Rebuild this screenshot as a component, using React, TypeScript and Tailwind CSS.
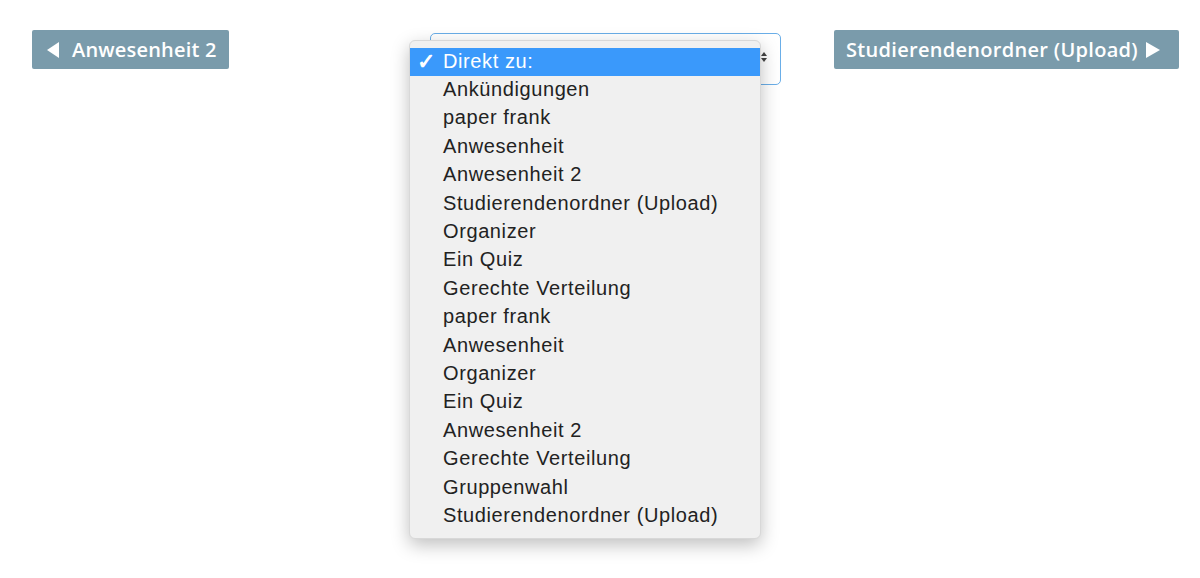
import React from "react";

const items = [
  "Ankündigungen",
  "paper frank",
  "Anwesenheit",
  "Anwesenheit 2",
  "Studierendenordner (Upload)",
  "Organizer",
  "Ein Quiz",
  "Gerechte Verteilung",
  "paper frank",
  "Anwesenheit",
  "Organizer",
  "Ein Quiz",
  "Anwesenheit 2",
  "Gerechte Verteilung",
  "Gruppenwahl",
  "Studierendenordner (Upload)",
];

export default function App() {
  return (
    <div className="w-[1200px] h-[578px] bg-white overflow-hidden">
      <div className="flex items-start pt-[30px] pl-[32px] pr-[21px]">
        <button
          className="flex items-center w-[197px] h-[39px] pl-[15px] gap-[13px] rounded-[2px] bg-[#7a9bab] text-white text-[20px] font-semibold tracking-[0.2px] whitespace-nowrap"
          style={{ fontFamily: '"Open Sans", sans-serif' }}
        >
          <svg width="12" height="16" viewBox="0 0 12 16"><polygon points="12,0 12,16 0,8" fill="white" /></svg>
          <span>Anwesenheit 2</span>
        </button>

        <div className="relative ml-[201px] mt-[3px] w-[351px] h-[52px] rounded-[5px] border border-[#6aaee8] bg-white">
          <div className="absolute right-[13px] top-[18px] flex flex-col gap-[2px]">
            <svg width="6" height="4" viewBox="0 0 6 4"><polygon points="0,4 6,4 3,0" fill="#444" /></svg>
            <svg width="6" height="4" viewBox="0 0 6 4"><polygon points="0,0 6,0 3,4" fill="#444" /></svg>
          </div>
          <div
            className="absolute left-[-22px] top-[6px] w-[352px] py-[7px] rounded-[6px] bg-[#f0f0f0] border border-[#d8d8d8] shadow-[0_6px_18px_rgba(0,0,0,0.25)] z-10"
            style={{ fontFamily: '"Liberation Sans", Arial, sans-serif' }}
          >
            <div className="flex items-center h-[28.4px] pb-[2px] bg-[#3a99fb] text-white text-[20px] tracking-[0.6px]">
              <span className="w-[33px] pl-[7px] text-[22px] font-bold">✓</span>
              <span>Direkt zu:</span>
            </div>
            {items.map((t, i) => (
              <div key={i} className="flex items-center h-[28.4px] pb-[3px] pl-[33px] text-[20px] tracking-[0.6px] text-[#222222] whitespace-nowrap">
                {t}
              </div>
            ))}
          </div>
        </div>

        <button
          className="ml-auto flex items-center w-[345px] h-[39px] pl-[12px] gap-[8px] rounded-[2px] bg-[#7a9bab] text-white text-[20px] font-semibold tracking-[0.3px] whitespace-nowrap"
          style={{ fontFamily: '"Open Sans", sans-serif' }}
        >
          <span>Studierendenordner (Upload)</span>
          <svg width="14" height="16" viewBox="0 0 14 16"><polygon points="0,0 0,16 14,8" fill="white" /></svg>
        </button>
      </div>
    </div>
  );
}
